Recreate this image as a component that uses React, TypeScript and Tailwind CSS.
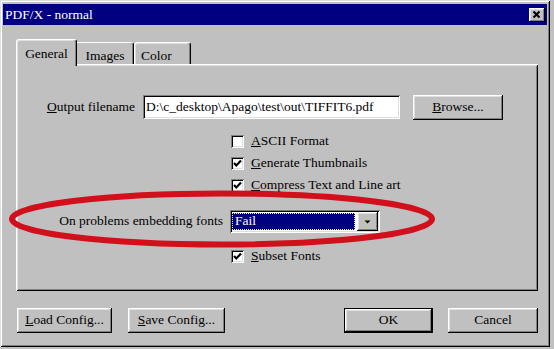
import React from "react";

const raised =
  "bg-[#c0c0c0] shadow-[inset_-1px_-1px_#000,inset_1px_1px_#fff,inset_-2px_-2px_#808080,inset_2px_2px_#dfdfdf]";
const sunken =
  "bg-white shadow-[inset_1px_1px_#808080,inset_-1px_-1px_#fff,inset_2px_2px_#000,inset_-2px_-2px_#dfdfdf]";

function Btn({ children, w, def }: { children: React.ReactNode; w: string; def?: boolean }) {
  return (
    <div
      className={`${w} h-[25px] flex items-center justify-center text-[13.5px] text-black ${
        def
          ? "border border-black bg-[#c0c0c0] shadow-[inset_-1px_-1px_#000,inset_1px_1px_#fff,inset_-2px_-2px_#808080,inset_2px_2px_#dfdfdf]"
          : raised
      }`}
    >
      {children}
    </div>
  );
}

function Check({ checked }: { checked: boolean }) {
  return (
    <div className={`w-[13px] h-[13px] ${sunken} flex items-center justify-center shrink-0`}>
      {checked && (
        <svg width="13" height="13" viewBox="0 0 13 13">
          <polyline points="3,6 5.3,8.5 10,3.5" fill="none" stroke="#000" strokeWidth="2.2" />
        </svg>
      )}
    </div>
  );
}

function CheckRow({ checked, u, rest }: { checked: boolean; u: string; rest: string }) {
  return (
    <div className="h-[22px] flex items-center gap-[7px]">
      <Check checked={checked} />
      <span className="text-[13.5px] text-black leading-none">
        <u>{u}</u>
        {rest}
      </span>
    </div>
  );
}

export default function App() {
  return (
    <div className="w-[554px] h-[349px] bg-[#c0c0c0] relative overflow-hidden font-['Liberation_Serif',serif]">
      <div className="w-[550px] h-[347px] pt-[4px] px-[3px] shadow-[inset_1px_1px_#dfdfdf,inset_-1px_-1px_#000,inset_2px_2px_#fff,inset_-2px_-2px_#808080] flex flex-col">
        {/* Title bar */}
        <div className="h-[21px] bg-[#000080] flex items-center justify-between pl-[2px] pr-[2px]">
          <span className="text-white text-[13.5px] leading-none">PDF/X - normal</span>
          <div className={`w-[16px] h-[14px] ${raised} flex items-center justify-center`}>
            <svg width="16" height="14" viewBox="0 0 16 14">
              <path d="M4.5 3.5 L10.5 9.5 M10.5 3.5 L4.5 9.5" stroke="#000" strokeWidth="2" />
            </svg>
          </div>
        </div>

        {/* Tabs */}
        <div className="ml-[13px] mt-[14px] w-[522px]">
          <div className="flex items-end h-[25px]">
            <div className="relative z-10 h-[27px] -mb-[2px] w-[61px] bg-[#c0c0c0] border-t border-l border-white border-r border-r-black rounded-t-[3px] shadow-[inset_-1px_0_#808080,inset_1px_1px_#dfdfdf] flex items-start justify-center pt-[4px] text-[13.5px] text-black">
              General
            </div>
            <div className="h-[22px] w-[57px] border-t border-white border-r border-r-black rounded-tr-[3px] shadow-[inset_-1px_0_#808080] flex items-start justify-center pt-[3px] text-[13.5px] text-black">
              Images
            </div>
            <div className="h-[22px] w-[57px] border-t border-l border-white border-r border-r-black rounded-t-[3px] shadow-[inset_-1px_0_#808080,inset_1px_1px_#dfdfdf] flex items-start pl-[6px] pt-[3px] text-[13.5px] text-black">
              Color
            </div>
          </div>

          {/* Panel */}
          <div className="h-[227px] shadow-[inset_1px_1px_#fff,inset_-1px_-1px_#000,inset_2px_2px_#dfdfdf,inset_-2px_-2px_#808080] pt-[31px]">
            <div className="flex items-center h-[24px]">
              <div className="w-[127px] pr-[8px] text-right text-[13.5px] text-black">
                <u>O</u>utput filename
              </div>
              <div className={`w-[257px] h-[24px] ${sunken} flex items-center pl-[3px] text-[13.5px] text-black overflow-hidden whitespace-nowrap`}>
                D:\c_desktop\Apago\test\out\TIFFIT6.pdf
              </div>
              <div className="ml-[13px]">
                <Btn w="w-[90px]">
                  <span>
                    <u>B</u>rowse...
                  </span>
                </Btn>
              </div>
            </div>

            <div className="pl-[215px] mt-[11px] flex flex-col">
              <CheckRow checked={false} u="A" rest="SCII Format" />
              <CheckRow checked={true} u="G" rest="enerate Thumbnails" />
              <CheckRow checked={true} u="C" rest="ompress Text and Line art" />
            </div>

            <div className="flex items-center h-[23px] mt-[14px]">
              <div className="w-[214px] pr-[7px] text-right text-[13.5px] text-black whitespace-nowrap">
                On problems embedding fonts
              </div>
              <div className={`w-[150px] h-[23px] ${sunken} flex items-center p-[2px]`}>
                <div className="flex-1 h-full pr-[2px] flex items-center">
                  <div className="w-full h-[17px] bg-[#000080] border border-dotted border-[#f0f0b0] flex items-center pl-[2px] text-white text-[13.5px]">
                    Fail
                  </div>
                </div>
                <div className={`w-[21px] h-[19px] ${raised} flex items-center justify-center`}>
                  <svg width="9" height="6" viewBox="0 0 9 6">
                    <path d="M1.5 1.5 L7.5 1.5 L4.5 4.5 Z" fill="#000" />
                  </svg>
                </div>
              </div>
            </div>

            <div className="pl-[215px] mt-[12px]">
              <CheckRow checked={true} u="S" rest="ubset Fonts" />
            </div>
          </div>
        </div>

        {/* Bottom buttons */}
        <div className="mt-[17px] flex justify-between pl-[14px] pr-[9px]">
          <div className="flex gap-[16px]">
            <Btn w="w-[95px]">
              <span>
                <u>L</u>oad Config...
              </span>
            </Btn>
            <Btn w="w-[97px]">
              <span>
                <u>S</u>ave Config...
              </span>
            </Btn>
          </div>
          <div className="flex gap-[15px]">
            <Btn w="w-[89px]" def>
              OK
            </Btn>
            <Btn w="w-[90px]">Cancel</Btn>
          </div>
        </div>
      </div>

      {/* Red annotation ellipse */}
      <svg className="absolute left-0 top-0 pointer-events-none" width="554" height="349" viewBox="0 0 554 349">
        <ellipse cx="222" cy="219" rx="210" ry="25.5" fill="none" stroke="#d2101c" strokeWidth="6" />
      </svg>
    </div>
  );
}
